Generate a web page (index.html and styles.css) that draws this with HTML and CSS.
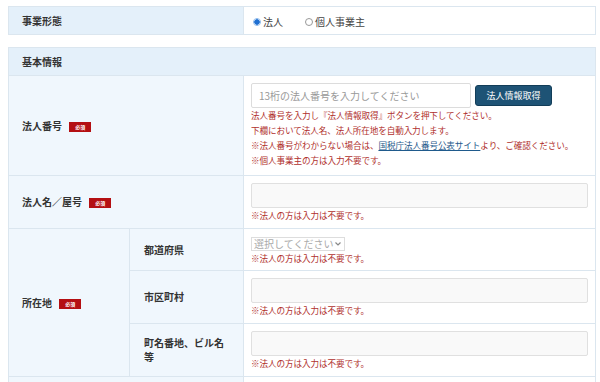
FILE: index.html
```html
<!DOCTYPE html>
<html lang="ja">
<head>
  <meta charset="UTF-8">
  <meta name="viewport" content="width=device-width, initial-scale=1.0">
  <title>申込フォーム</title>
  <link rel="stylesheet" href="styles.css">
</head>
<body>
  <div class="form-wrap">
    <table class="form-table type-table">
      <colgroup>
        <col class="col-label">
        <col>
      </colgroup>
      <tr>
        <th class="label">事業形態</th>
        <td class="value">
          <div class="radios">
            <label class="radio"><span class="dot checked"></span>法人</label>
            <label class="radio"><span class="dot"></span>個人事業主</label>
          </div>
        </td>
      </tr>
    </table>

    <table class="form-table info-table">
      <colgroup>
        <col class="col-main">
        <col class="col-sub">
        <col>
      </colgroup>
      <tr>
        <th class="section" colspan="3">基本情報</th>
      </tr>
      <tr>
        <th class="label" colspan="2">法人番号 <span class="req">必須</span></th>
        <td class="value value-number">
          <div class="number-row">
            <input type="text" class="field field-number" placeholder="13桁の法人番号を入力してください">
            <button class="btn-fetch">法人情報取得</button>
          </div>
          <p class="note">法人番号を入力し『法人情報取得』ボタンを押下してください。<br>
            下欄において法人名、法人所在地を自動入力します。<br>
            ※法人番号がわからない場合は、<a href="#">国税庁法人番号公表サイト</a>より、ご確認ください。<br>
            ※個人事業主の方は入力不要です。</p>
        </td>
      </tr>
      <tr>
        <th class="label" colspan="2">法人名／屋号 <span class="req">必須</span></th>
        <td class="value">
          <input type="text" class="field" disabled>
          <p class="note">※法人の方は入力は不要です。</p>
        </td>
      </tr>
      <tr>
        <th class="label" rowspan="3">所在地 <span class="req">必須</span></th>
        <th class="label sub">都道府県</th>
        <td class="value value-tight">
          <select class="pref" disabled>
            <option>選択してください</option>
          </select>
          <p class="note">※法人の方は入力は不要です。</p>
        </td>
      </tr>
      <tr>
        <th class="label sub">市区町村</th>
        <td class="value">
          <input type="text" class="field" disabled>
          <p class="note">※法人の方は入力は不要です。</p>
        </td>
      </tr>
      <tr>
        <th class="label sub">町名番地、ビル名等</th>
        <td class="value">
          <input type="text" class="field" disabled>
          <p class="note">※法人の方は入力は不要です。</p>
        </td>
      </tr>
      <tr>
        <th class="label" colspan="2">&nbsp;</th>
        <td class="value">&nbsp;</td>
      </tr>
    </table>
  </div>
</body>
</html>
```

FILE: styles.css
```css
body {
  margin: 0;
  font-family: "Noto Sans CJK JP", "Noto Sans", sans-serif;
  color: #333;
  background-color: #fff;
  overflow: hidden;
}

.form-wrap {
  width: 588px;
  padding: 6px 0 0 8px;
}

.form-table {
  width: 100%;
  border-collapse: collapse;
  table-layout: fixed;
}

.form-table th,
.form-table td {
  border: 1px solid #dbe6ef;
}

.type-table {
  margin-bottom: 12px;
}

.type-table .label {
  height: 26px;
  background-color: #e4f0fa;
}

.col-label {
  width: 235px;
}

.col-main {
  width: 121px;
}

.col-sub {
  width: 114px;
}

.label {
  background-color: #f0f7fd;
  text-align: left;
  font-size: 10px;
  font-weight: bold;
  padding: 0 13px;
  line-height: 14px;
}

.label.sub {
  padding: 0 14px;
}

.section {
  background-color: #e4f0fa;
  text-align: left;
  font-size: 10px;
  font-weight: bold;
  height: 27px;
  padding: 0 13px;
}

.req {
  display: inline-block;
  vertical-align: middle;
  margin-left: 5px;
  width: 22px;
  height: 10px;
  line-height: 10px;
  background-color: #b40f12;
  color: #fff;
  font-size: 5px;
  text-align: center;
}

.value {
  background-color: #fff;
  padding: 7px 7px 5px 7px;
  font-size: 10px;
}

.value-number {
  padding-bottom: 7px;
}

.value-tight {
  padding-top: 8px;
  padding-bottom: 4px;
}

.radios {
  display: flex;
  gap: 22px;
  padding-left: 2px;
  color: #444;
}

.radio {
  display: flex;
  align-items: center;
  gap: 2px;
}

.dot {
  box-sizing: border-box;
  width: 8px;
  height: 8px;
  border-radius: 50%;
  border: 1px solid #999;
  background-color: #fff;
}

.dot.checked {
  border-color: #9cc3ee;
  background: radial-gradient(circle, #1f6fd1 0 2.5px, #d9e8fb 3px);
}

.number-row {
  display: flex;
  align-items: center;
  gap: 4px;
}

.field {
  display: block;
  box-sizing: border-box;
  width: 100%;
  height: 25px;
  border: 1px solid #e0e0e0;
  border-radius: 2px;
  background-color: #f9f9f9;
  font-family: inherit;
  font-size: 10px;
  padding: 0 7px;
  margin: 0;
}

.field-number {
  width: 220px;
  height: 25px;
  background-color: #fff;
  border-color: #dcdcdc;
}

.field-number::placeholder {
  color: #999;
}

.btn-fetch {
  width: 77px;
  height: 21px;
  border: 1px solid #123d58;
  border-radius: 3px;
  background-color: #1e5375;
  color: #fff;
  font-family: inherit;
  font-size: 9px;
  padding: 0;
}

.note {
  margin: 0;
  color: #b0302d;
  font-size: 8.6px;
  letter-spacing: -0.1px;
  line-height: 15px;
  white-space: nowrap;
}

.note a {
  color: #1f5a8c;
}

.pref {
  display: block;
  box-sizing: border-box;
  width: 94px;
  height: 14px;
  margin: 0;
  padding: 0 0 0 2px;
  border: 1px solid #ddd;
  background: #fff url("data:image/svg+xml,%3Csvg xmlns='http://www.w3.org/2000/svg' width='6' height='4'%3E%3Cpath d='M0.5 0.5L3 3L5.5 0.5' fill='none' stroke='%23888' stroke-width='1.2'/%3E%3C/svg%3E") no-repeat right 3px center;
  color: #aaa;
  font-family: inherit;
  font-size: 10px;
  line-height: 12px;
  appearance: none;
  opacity: 1;
}
```
